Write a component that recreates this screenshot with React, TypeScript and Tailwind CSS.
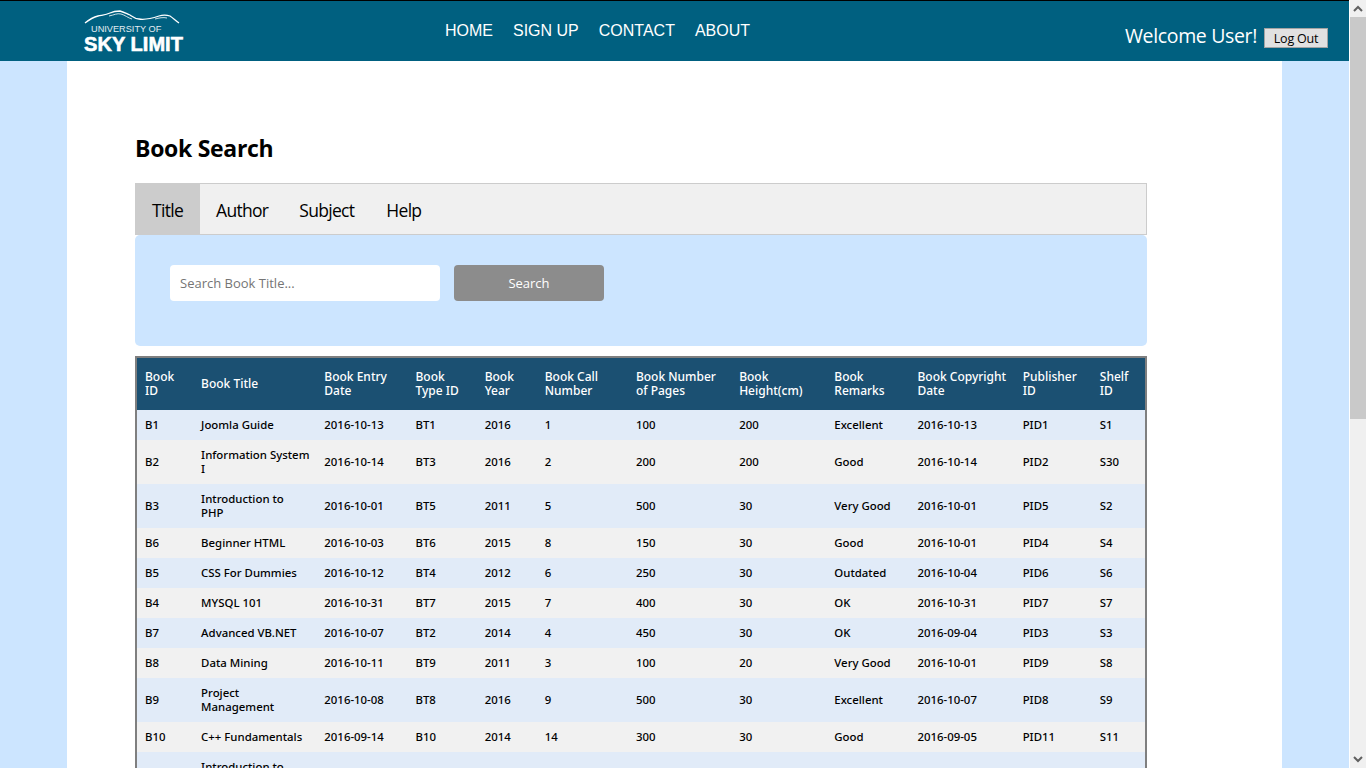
const headers = ["Book ID","Book Title","Book Entry Date","Book Type ID","Book Year","Book Call Number","Book Number of Pages","Book Height(cm)","Book Remarks","Book Copyright Date","Publisher ID","Shelf ID"];
const widths = [57,123,91,69,60,91,103,95,83,105,77,54];
const rows = [
["B1","Joomla Guide","2016-10-13","BT1","2016","1","100","200","Excellent","2016-10-13","PID1","S1"],
["B2","Information System\nI","2016-10-14","BT3","2016","2","200","200","Good","2016-10-14","PID2","S30"],
["B3","Introduction to\nPHP","2016-10-01","BT5","2011","5","500","30","Very Good","2016-10-01","PID5","S2"],
["B6","Beginner HTML","2016-10-03","BT6","2015","8","150","30","Good","2016-10-01","PID4","S4"],
["B5","CSS For Dummies","2016-10-12","BT4","2012","6","250","30","Outdated","2016-10-04","PID6","S6"],
["B4","MYSQL 101","2016-10-31","BT7","2015","7","400","30","OK","2016-10-31","PID7","S7"],
["B7","Advanced VB.NET","2016-10-07","BT2","2014","4","450","30","OK","2016-09-04","PID3","S3"],
["B8","Data Mining","2016-10-11","BT9","2011","3","100","20","Very Good","2016-10-01","PID9","S8"],
["B9","Project\nManagement","2016-10-08","BT8","2016","9","500","30","Excellent","2016-10-07","PID8","S9"],
["B10","C++ Fundamentals","2016-09-14","B10","2014","14","300","30","Good","2016-09-05","PID11","S11"],
["B11","Introduction to\nJava","2016-09-20","BT11","2015","15","320","30","Good","2016-09-10","PID12","S12"],
];
export default function App() {
  return (
    <div className="flex h-screen overflow-hidden font-['Open_Sans',sans-serif] text-black">
      <div className="flex min-w-0 flex-1 flex-col bg-[#cce5ff]">
        <header className="flex h-[61px] shrink-0 items-start border-t border-black bg-[#006080] text-white">
          <div className="ml-[83px] mt-[9px] flex h-[42px] w-[101px] shrink-0 flex-col">
            <svg viewBox="0 0 101 15" className="h-[15px] w-[101px]" fill="none" stroke="#ffffff" strokeWidth="1.3">
              <path d="M2 13 C7 9 11 7 15 6 C20 5 23 5 27 3 C31 1 34 1 37 1 C41 2 44 4 47 5 C50 7 52 9 56 9 C62 10 70 8 76 6 C79 5 84 5 87 6 C90 8 93 11 96 13" />
              <path d="M26 6 C31 5 34 3 38 4 C42 5 45 8 49 9 M72 9 C76 8 80 7 84 8" strokeWidth="0.8" />
            </svg>
            <div className="ml-[8px] font-['Liberation_Sans',sans-serif] text-[9.2px] leading-[9px] whitespace-nowrap text-[#e3edf2]">UNIVERSITY OF</div>
            <div className="ml-px mt-[2px] whitespace-nowrap font-['Liberation_Sans',sans-serif] text-[20px] leading-[16px] font-bold tracking-[0.05px] [-webkit-text-stroke:0.6px_white]">SKY LIMIT</div>
          </div>
          <nav className="ml-[261px] mt-[21px] flex gap-5 font-['Liberation_Sans',sans-serif] text-base leading-[18px]">
            <span>HOME</span><span>SIGN UP</span><span>CONTACT</span><span>ABOUT</span>
          </nav>
          <div className="ml-auto mr-[21px] mt-[21px] flex items-start">
            <span className="text-[19.5px] leading-[27px] tracking-[-0.35px]">Welcome User!</span>
            <button className="ml-[7px] mt-[6px] h-[20px] w-[64px] border border-[#a3a3a3] bg-[#e1e1e1] text-[12.5px] leading-[15px] tracking-[-0.2px] text-black">Log Out</button>
          </div>
        </header>
        <main className="mx-[67px] flex-1 bg-white px-[68px]">
          <h1 className="mt-[71px] text-[23px] leading-[33px] font-bold tracking-[-0.3px]">Book Search</h1>
          <div className="mt-[18px] flex h-[52px] w-[1012px] border border-[#cccccc] bg-[#f0f0f0] text-[17.5px] tracking-[-0.7px]">
            <div className="-my-px -ml-px flex items-center bg-[#cccccc] pl-[17px] pr-[17px] pt-[2px]">Title</div>
            <div className="flex items-center pl-4 pr-[15px] pt-[2px]">Author</div>
            <div className="flex items-center px-4 pt-[2px]">Subject</div>
            <div className="flex items-center px-4 pt-[2px]">Help</div>
          </div>
          <div className="flex h-[111px] w-[1012px] items-start gap-[14px] rounded-[5px] bg-[#cce5ff] pl-[35px] pt-[30px] text-[13px]">
            <div className="flex h-9 w-[270px] items-center rounded-[4px] bg-white pl-[10px] pt-[2px] text-[#757575]">Search Book Title...</div>
            <button className="h-9 w-[150px] rounded-[4px] bg-[#8c8c8c] pt-[2px] text-white">Search</button>
          </div>
          <table className="mt-[10px] w-[1012px] table-fixed border-collapse border-2 border-[#7f7f7f] font-['Noto_Sans',sans-serif] text-[11.4px] leading-[14px] font-medium">
            <colgroup>{widths.map((w, i) => <col key={i} style={{ width: w }} />)}</colgroup>
            <thead>
              <tr className="h-[53px] bg-[#1b5072] text-left text-[12px] text-white">
                {headers.map((h) => <th key={h} className="px-2 py-0 font-medium">{h}</th>)}
              </tr>
            </thead>
            <tbody>
              {rows.map((r, i) => (
                <tr key={r[0]} className={i % 2 === 0 ? "bg-[#e1ebf8]" : "bg-[#f1f1f1]"}>
                  {r.map((c, j) => <td key={j} className="whitespace-pre px-2 py-2">{c}</td>)}
                </tr>
              ))}
            </tbody>
          </table>
        </main>
      </div>
      <div className="flex w-[17px] shrink-0 flex-col border-l border-white bg-[#f0f0f0]">
        <div className="flex h-[17px] items-center justify-center">
          <svg width="10" height="7" viewBox="0 0 10 7" fill="none" stroke="#606060" strokeWidth="2"><path d="M1 6 L5 2 L9 6" /></svg>
        </div>
        <div className="h-[402px] bg-[#c9c9c9]" />
        <div className="flex-1" />
        <div className="flex h-[17px] items-center justify-center">
          <svg width="10" height="7" viewBox="0 0 10 7" fill="none" stroke="#606060" strokeWidth="2"><path d="M1 1 L5 5 L9 1" /></svg>
        </div>
      </div>
    </div>
  );
}
